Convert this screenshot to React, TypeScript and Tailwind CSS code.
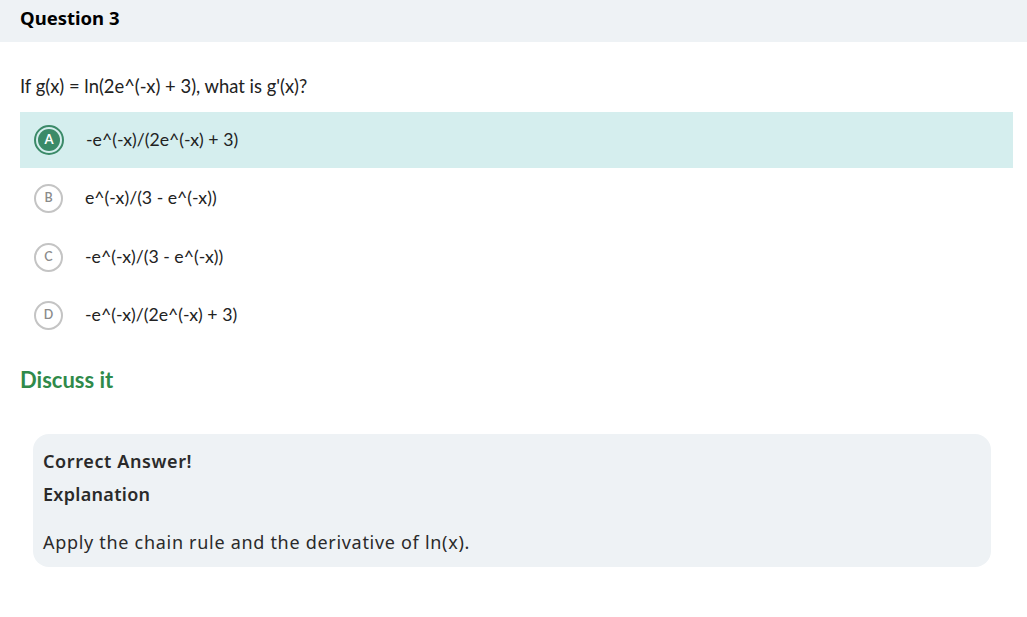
import React from 'react'

type option = {
    letter: string
    text: string
    selected?: boolean
}

const options: option[] = [
    { letter: 'A', text: '-e^(-x)/(2e^(-x) + 3)', selected: true },
    { letter: 'B', text: 'e^(-x)/(3 - e^(-x))' },
    { letter: 'C', text: '-e^(-x)/(3 - e^(-x))' },
    { letter: 'D', text: '-e^(-x)/(2e^(-x) + 3)' },
]

const OptionRow: React.FC<{ opt: option }> = ({ opt }) => {
    return (
        <div className={`flex items-center h-[56px] pl-[14px] ${opt.selected ? 'bg-[#d5eeee]' : ''}`}>
            {opt.selected ? (
                <div className="w-[30px] h-[30px] rounded-full border-2 border-[#3b8a68] flex items-center justify-center">
                    <div className="w-[22px] h-[22px] rounded-full bg-[#3b8a68] flex items-center justify-center text-white text-[13px] font-bold">
                        {opt.letter}
                    </div>
                </div>
            ) : (
                <div className="w-[29px] h-[29px] rounded-full border-2 border-[#c4c4c4] flex items-center justify-center text-[#8a8a8a] text-[12.5px] font-semibold">
                    {opt.letter}
                </div>
            )}
            <span className="ml-[22px] text-[17.7px] text-[#222]">{opt.text}</span>
        </div>
    )
}

export default function App() {
    return (
        <div className="w-[1027px] h-[617px] bg-white" style={{ fontFamily: 'Lato, "Liberation Sans", sans-serif' }}>
            <div className="h-[42px] bg-[#eef2f5] px-[20px] pt-[5px]">
                <h2 className="text-[18.5px] font-bold text-black leading-[26px]" style={{ fontFamily: '"Noto Sans", sans-serif' }}>Question 3</h2>
            </div>
            <div className="px-[20px]">
                <p className="mt-[31px] text-[18.4px] leading-[26px] text-[#222]">If g(x) = ln(2e^(-x) + 3), what is g'(x)?</p>
                <div className="mt-[13px] mr-[-6px] flex flex-col gap-[2.5px]">
                    {options.map((opt, i) => (
                        <OptionRow opt={opt} key={i} />
                    ))}
                </div>
                <div className="mt-[21px] text-[22px] font-bold text-[#2f8a4a] leading-[30px]">Discuss it</div>
                <div className="mt-[39px] ml-[13px] mr-[16px] bg-[#eef2f5] rounded-[16px] pl-[10px] pt-[13px] h-[133px] text-[#2a2a2a]" style={{ fontFamily: '"Noto Sans", sans-serif' }}>
                    <div className="text-[18px] font-semibold leading-[28px] tracking-[0.6px]">Correct Answer!</div>
                    <div className="mt-[5px] text-[18px] font-semibold leading-[28px] tracking-[0.3px]">Explanation</div>
                    <div className="mt-[20px] text-[18px] leading-[28px] tracking-[0.7px]">Apply the chain rule and the derivative of ln(x).</div>
                </div>
            </div>
        </div>
    )
}
